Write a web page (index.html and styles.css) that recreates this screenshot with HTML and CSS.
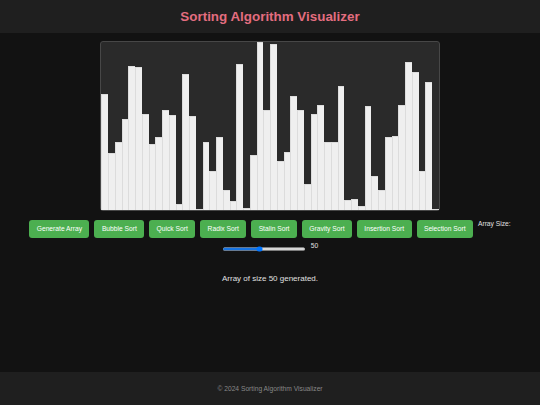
FILE: index.html
```html
<!DOCTYPE html>
<html lang="en">
<head>
<meta charset="utf-8">
<title>Sorting Algorithm Visualizer</title>
<link rel="stylesheet" href="styles.css">
</head>
<body>
<header class="site-header">
  <h1 class="site-title">Sorting Algorithm Visualizer</h1>
</header>
<main class="main">
  <div class="chart">
    <div class="bar" style="height:116.5px"></div>
    <div class="bar" style="height:57px"></div>
    <div class="bar" style="height:68px"></div>
    <div class="bar" style="height:91px"></div>
    <div class="bar" style="height:144px"></div>
    <div class="bar" style="height:143px"></div>
    <div class="bar" style="height:96px"></div>
    <div class="bar" style="height:66.5px"></div>
    <div class="bar" style="height:73px"></div>
    <div class="bar" style="height:100.5px"></div>
    <div class="bar" style="height:95px"></div>
    <div class="bar" style="height:6px"></div>
    <div class="bar" style="height:136px"></div>
    <div class="bar" style="height:94px"></div>
    <div class="bar" style="height:1.5px"></div>
    <div class="bar" style="height:68.5px"></div>
    <div class="bar" style="height:39px"></div>
    <div class="bar" style="height:73px"></div>
    <div class="bar" style="height:20px"></div>
    <div class="bar" style="height:9px"></div>
    <div class="bar" style="height:146px"></div>
    <div class="bar" style="height:2.5px"></div>
    <div class="bar" style="height:55px"></div>
    <div class="bar" style="height:168px"></div>
    <div class="bar" style="height:100px"></div>
    <div class="bar" style="height:166px"></div>
    <div class="bar" style="height:49px"></div>
    <div class="bar" style="height:58px"></div>
    <div class="bar" style="height:114.5px"></div>
    <div class="bar" style="height:100.5px"></div>
    <div class="bar" style="height:26.5px"></div>
    <div class="bar" style="height:96px"></div>
    <div class="bar" style="height:105px"></div>
    <div class="bar" style="height:68px"></div>
    <div class="bar" style="height:68px"></div>
    <div class="bar" style="height:124.5px"></div>
    <div class="bar" style="height:10.5px"></div>
    <div class="bar" style="height:11px"></div>
    <div class="bar" style="height:4.5px"></div>
    <div class="bar" style="height:104px"></div>
    <div class="bar" style="height:34.5px"></div>
    <div class="bar" style="height:20px"></div>
    <div class="bar" style="height:73px"></div>
    <div class="bar" style="height:74.5px"></div>
    <div class="bar" style="height:105px"></div>
    <div class="bar" style="height:148px"></div>
    <div class="bar" style="height:138.5px"></div>
    <div class="bar" style="height:39px"></div>
    <div class="bar" style="height:128.5px"></div>
    <div class="bar" style="height:0px"></div>
  </div>
  <div class="controls">
    <button class="btn" type="button">Generate Array</button>
    <button class="btn" type="button">Bubble Sort</button>
    <button class="btn" type="button">Quick Sort</button>
    <button class="btn" type="button">Radix Sort</button>
    <button class="btn" type="button">Stalin Sort</button>
    <button class="btn" type="button">Gravity Sort</button>
    <button class="btn" type="button">Insertion Sort</button>
    <button class="btn" type="button">Selection Sort</button>
    <label class="size-label" for="size">Array Size:</label>
    <input class="size-range" id="size" type="range" min="10" max="100" value="50">
    <span class="size-value">50</span>
  </div>
  <p class="status">Array of size 50 generated.</p>
</main>
<footer class="site-footer">© 2024 Sorting Algorithm Visualizer</footer>
</body>
</html>
```

FILE: styles.css
```css
html, body {
  height: 100%;
}

body {
  margin: 0;
  background: #121212;
  color: #e0e0e0;
  font-family: "Liberation Sans", Arial, sans-serif;
  display: flex;
  flex-direction: column;
  min-height: 100vh;
}

.site-header {
  background: #1f1f1f;
  height: 33.3px;
  display: flex;
  align-items: center;
  justify-content: center;
  flex: none;
}

.site-title {
  margin: 0;
  font-size: 13.4px;
  font-weight: bold;
  color: #e36d7f;
}

.main {
  flex: 1;
  display: flex;
  flex-direction: column;
  align-items: center;
  padding-top: 8px;
}

.chart {
  width: 337.5px;
  height: 168px;
  border: 1px solid #474747;
  border-radius: 3px;
  background: #2a2a2a;
  display: flex;
  align-items: flex-end;
}

.bar {
  flex: none;
  width: 6.75px;
  box-sizing: border-box;
  background: #efefef;
  border-left: 1px solid #dcdcdc;
  border-top: 1px solid #dcdcdc;
}

.controls {
  margin-top: 8.4px;
  display: flex;
  flex-wrap: wrap;
  justify-content: center;
  align-items: flex-start;
  gap: 4.4px 5px;
  width: 100%;
}

.btn {
  height: 18px;
  padding: 0 7.4px;
  border: none;
  border-radius: 3px;
  background: #4caf50;
  color: #ffffff;
  font-family: "Liberation Sans", Arial, sans-serif;
  font-size: 6.7px;
}

.size-label,
.size-value {
  font-size: 6.7px;
  color: #e0e0e0;
}

.size-range {
  zoom: 0.4;
  width: 210px;
  margin: 9px 0 2px;
}

.status {
  margin: 21px 0 0;
  font-size: 8px;
  color: #e0e0e0;
}

.site-footer {
  flex: none;
  background: #1f1f1f;
  color: #888888;
  font-size: 6.7px;
  text-align: center;
  padding: 13px 0;
}
```
